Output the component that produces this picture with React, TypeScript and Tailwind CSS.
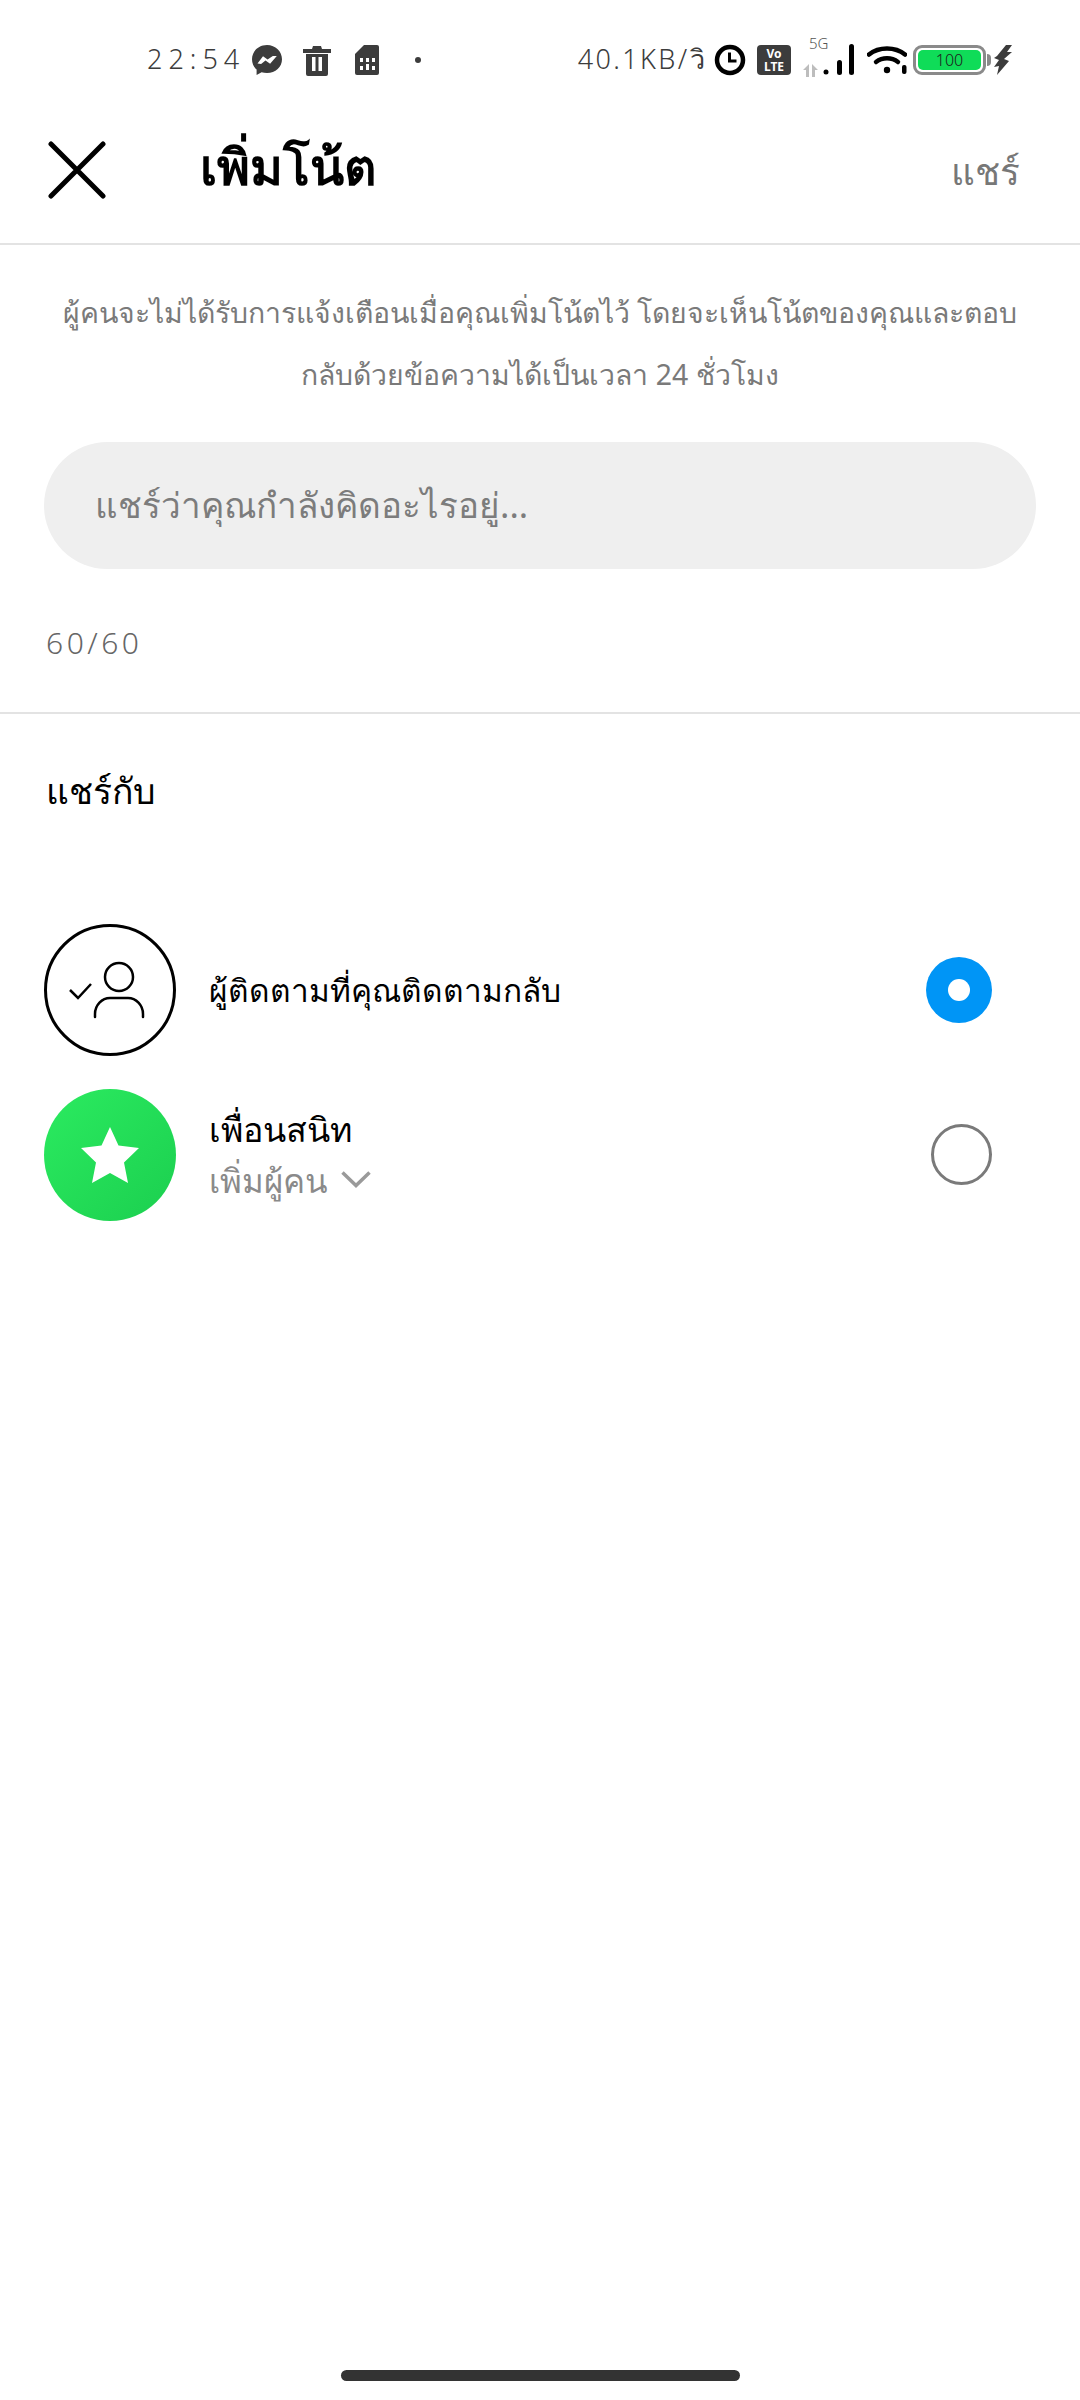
const STATUS_INK = "#3c3c3c";

function MessengerIcon() {
  return (
    <svg width="32" height="32" viewBox="0 0 32 32">
      <path
        fill={STATUS_INK}
        d="M16 1C7.5 1 1 7.2 1 15.2c0 4.2 1.8 7.8 4.6 10.3V31l5-2.8c1.6.5 3.5.7 5.4.7 8.5 0 15-6 15-13.7S24.5 1 16 1z"
      />
      <path fill="#fff" d="M6.5 19.5l5.5-7.3 4.6 3.4 5.2-3.6 4 0-6.7 7.8-4.6-3.4-4.4 3.6z" />
    </svg>
  );
}

function TrashIcon() {
  return (
    <svg width="28" height="32" viewBox="0 0 28 32">
      <path fill={STATUS_INK} d="M0 5h9l1-3h8l1 3h9v4H0zM3 10h22v20a2 2 0 0 1-2 2H5a2 2 0 0 1-2-2z" />
      <rect x="9" y="13" width="3.5" height="14" fill="#fff" />
      <rect x="15.5" y="13" width="3.5" height="14" fill="#fff" />
    </svg>
  );
}

function SimIcon() {
  return (
    <svg width="24" height="30" viewBox="0 0 24 30">
      <path fill={STATUS_INK} d="M9 0h13a2 2 0 0 1 2 2v26a2 2 0 0 1-2 2H2a2 2 0 0 1-2-2V9z" />
      <g fill="#fff">
        <rect x="5" y="13" width="3" height="4" />
        <rect x="11" y="13" width="3" height="4" />
        <rect x="17" y="13" width="3" height="4" />
        <rect x="5" y="21" width="3" height="4" />
        <rect x="11" y="19" width="3" height="6" />
        <rect x="17" y="21" width="3" height="4" />
      </g>
    </svg>
  );
}

function ClockIcon() {
  return (
    <svg width="32" height="32" viewBox="0 0 32 32" fill="none">
      <circle cx="16" cy="16" r="13" stroke="#000" strokeWidth="4.5" />
      <path d="M15.5 8.5v8.5h7" stroke="#000" strokeWidth="3" />
    </svg>
  );
}

function SignalIcon() {
  return (
    <svg width="52" height="34" viewBox="0 0 52 34">
      <path fill="#bdbdbd" d="M1 27l6-6v13H4v-7zM10 21l6 6h-3v7h-3z" />
      <circle cx="24" cy="29" r="2.5" fill="#000" />
      <rect x="35" y="17" width="5" height="15" rx="2.5" fill="#000" />
      <rect x="47" y="1" width="5" height="31" rx="2.5" fill="#000" />
    </svg>
  );
}

function WifiIcon() {
  return (
    <svg width="40" height="30" viewBox="0 0 40 30" fill="none">
      <path d="M2 9.5C12 1.500 28 1.500 38 9.500" stroke="#000" strokeWidth="4.500" strokeLinecap="round" />
      <path d="M9 17c6.500-5 15.500-5 22 0" stroke="#000" strokeWidth="4.500" strokeLinecap="round" />
      <circle cx="20" cy="25" r="3.200" fill="#000" />
      <rect x="35" y="20" width="4.500" height="9" rx="2" fill="#000" />
    </svg>
  );
}

function BoltIcon() {
  return (
    <svg width="18" height="30" viewBox="0 0 18 30">
      <path fill={STATUS_INK} d="M12 0L3 11l-3 2 5 2-5 7 5-1-2 9 12-14-5-2 8-7-5 0 5-7z" />
    </svg>
  );
}

function FollowBackIcon() {
  return (
    <svg width="76" height="60" viewBox="0 0 76 60" className="mr-[6px]" fill="none" stroke="#000" strokeWidth="2.500">
      <circle cx="50" cy="17" r="14" />
      <path d="M26 57v-3c0-9 7-16 15-16h18c8 0 15 7 15 16v3" strokeLinecap="round" />
      <path d="M1 30l8 8 13-14" />
    </svg>
  );
}

function StatusBar() {
  return (
    <div className="flex h-[120px] items-center justify-between pl-[147px] pr-[68px] pb-[1px] font-light text-[#3c3c3c]">
      <div className="flex items-center">
        <span className="text-[27px] tracking-[6px]">22:54</span>
        <span className="ml-[6px]"><MessengerIcon /></span>
        <span className="ml-[20px]"><TrashIcon /></span>
        <span className="ml-[24px]"><SimIcon /></span>
        <span className="ml-[36px] h-[6px] w-[6px] rounded-full bg-[#3c3c3c]" />
      </div>
      <div className="flex items-center">
        <span className="text-[27px] tracking-[2.400px]">40.1KB/วิ</span>
        <span className="ml-[7px]"><ClockIcon /></span>
        <span className="ml-[11px] flex h-[30px] w-[34px] flex-col items-center justify-center rounded-[4px] bg-[#3c3c3c] text-[12px] leading-[13px] font-bold text-white">
          <span>Vo</span>
          <span>LTE</span>
        </span>
        <span className="relative ml-[11px]">
          <SignalIcon />
          <span className="absolute left-[7px] top-[-9px] text-[15px] leading-[18px] text-[#555]">5G</span>
        </span>
        <span className="ml-[13px]"><WifiIcon /></span>
        <span className="ml-[6px] flex h-[30px] w-[73px] items-center justify-center rounded-[9px] border-[3px] border-[#8a8a8a] p-[2px]">
          <span className="flex h-full w-full items-center justify-center rounded-[5px] bg-[#0fdc58] text-[16px] leading-none text-[#1d1d1d]">
            100
          </span>
        </span>
        <span className="ml-[1px] h-[12px] w-[4px] rounded-r-full bg-[#8a8a8a]" />
        <span className="ml-[3px]"><BoltIcon /></span>
      </div>
    </div>
  );
}

function Radio({ selected }: { selected: boolean }) {
  if (selected) {
    return (
      <span className="flex h-[66px] w-[66px] items-center justify-center rounded-full bg-[#0095f6]">
        <span className="h-[22px] w-[22px] rounded-full bg-white" />
      </span>
    );
  }
  return <span className="ml-[5px] block h-[61px] w-[61px] rounded-full border-[3px] border-[#7a7a7a]" />;
}

export default function App() {
  return (
    <div className="flex h-[2400px] w-[1080px] flex-col bg-white font-['Noto_Sans','DejaVu_Sans',sans-serif] text-black">
      <StatusBar />

      {/* Header */}
      <header className="flex h-[125px] items-start border-b-2 border-[#e3e3e3] pl-[48px] pr-[60px]">
        <svg width="58" height="58" viewBox="0 0 58 58" className="mt-[21px] shrink-0" fill="none" stroke="#000" strokeWidth="5" strokeLinecap="round">
          <path d="M3 3l52 52M55 3L3 55" />
        </svg>
        <h1 className="ml-[94px] mt-[16px] text-[50px] leading-[60px] font-bold">เพิ่มโน้ต</h1>
        <span className="ml-auto mt-[25px] text-[37px] leading-[52px] text-[#777]">แชร์</span>
      </header>

      {/* Intro copy */}
      <p className="mt-[36px] px-[40px] text-center text-[28.400px] leading-[62px] text-[#7a7a7a]">
        ผู้คนจะไม่ได้รับการแจ้งเตือนเมื่อคุณเพิ่มโน้ตไว้ โดยจะเห็นโน้ตของคุณและตอบกลับด้วยข้อความได้เป็นเวลา 24 ชั่วโมง
      </p>

      {/* Note input */}
      <div className="mx-[44px] mt-[37px] flex h-[127px] w-[992px] items-center rounded-[64px] bg-[#efefef] pl-[51px] text-[35px] text-[#7c7c7c]">
        แชร์ว่าคุณกำลังคิดอะไรอยู่...
      </div>
      <div className="ml-[46px] mt-[52px] text-[30px] leading-[44px] font-light tracking-[3.500px] text-[#666]">60/60</div>

      <div className="mt-[47px] border-t-2 border-[#e3e3e3]" />

      <h2 className="ml-[46px] mt-[46px] text-[35.500px] leading-[60px]">แชร์กับ</h2>

      {/* Audience options */}
      <div className="mt-[104px] flex h-[132px] items-center pl-[44px] pr-[88px]">
        <span className="flex h-[132px] w-[132px] shrink-0 items-center justify-center rounded-full border-[3px] border-black">
          <FollowBackIcon />
        </span>
        <span className="ml-[33px] text-[31.600px]">ผู้ติดตามที่คุณติดตามกลับ</span>
        <span className="ml-auto"><Radio selected /></span>
      </div>

      <div className="mt-[32px] flex h-[133px] items-center pl-[44px] pr-[88px]">
        <span className="flex h-[132px] w-[132px] shrink-0 items-center justify-center rounded-full bg-gradient-to-br from-[#2beb60] to-[#1bcf4f]">
          <svg width="58" height="56" viewBox="0 0 58 56">
            <path fill="#fff" d="M29 0l8.500 18.500L58 21 43 35.500 47 56 29 46 11 56l4-20.500L0 21l20.500-2.500z" />
          </svg>
        </span>
        <div className="ml-[33px] flex flex-col gap-[7px]">
          <span className="text-[34px] leading-[46px]">เพื่อนสนิท</span>
          <span className="flex items-center text-[33px] leading-[44px] text-[#8a8a8a]">
            เพิ่มผู้คน
            <svg width="30" height="17" viewBox="0 0 30 17" className="ml-[13px] mt-[-3px]" fill="none" stroke="#9a9a9a" strokeWidth="3.500">
              <path d="M1.500 1.500L15 14.500 28.500 1.500" />
            </svg>
          </span>
        </div>
        <span className="ml-auto"><Radio selected={false} /></span>
      </div>

      {/* Gesture bar */}
      <div className="mt-auto mb-[19px] h-[11px] w-[399px] self-center rounded-full bg-[#333]" />
    </div>
  );
}
